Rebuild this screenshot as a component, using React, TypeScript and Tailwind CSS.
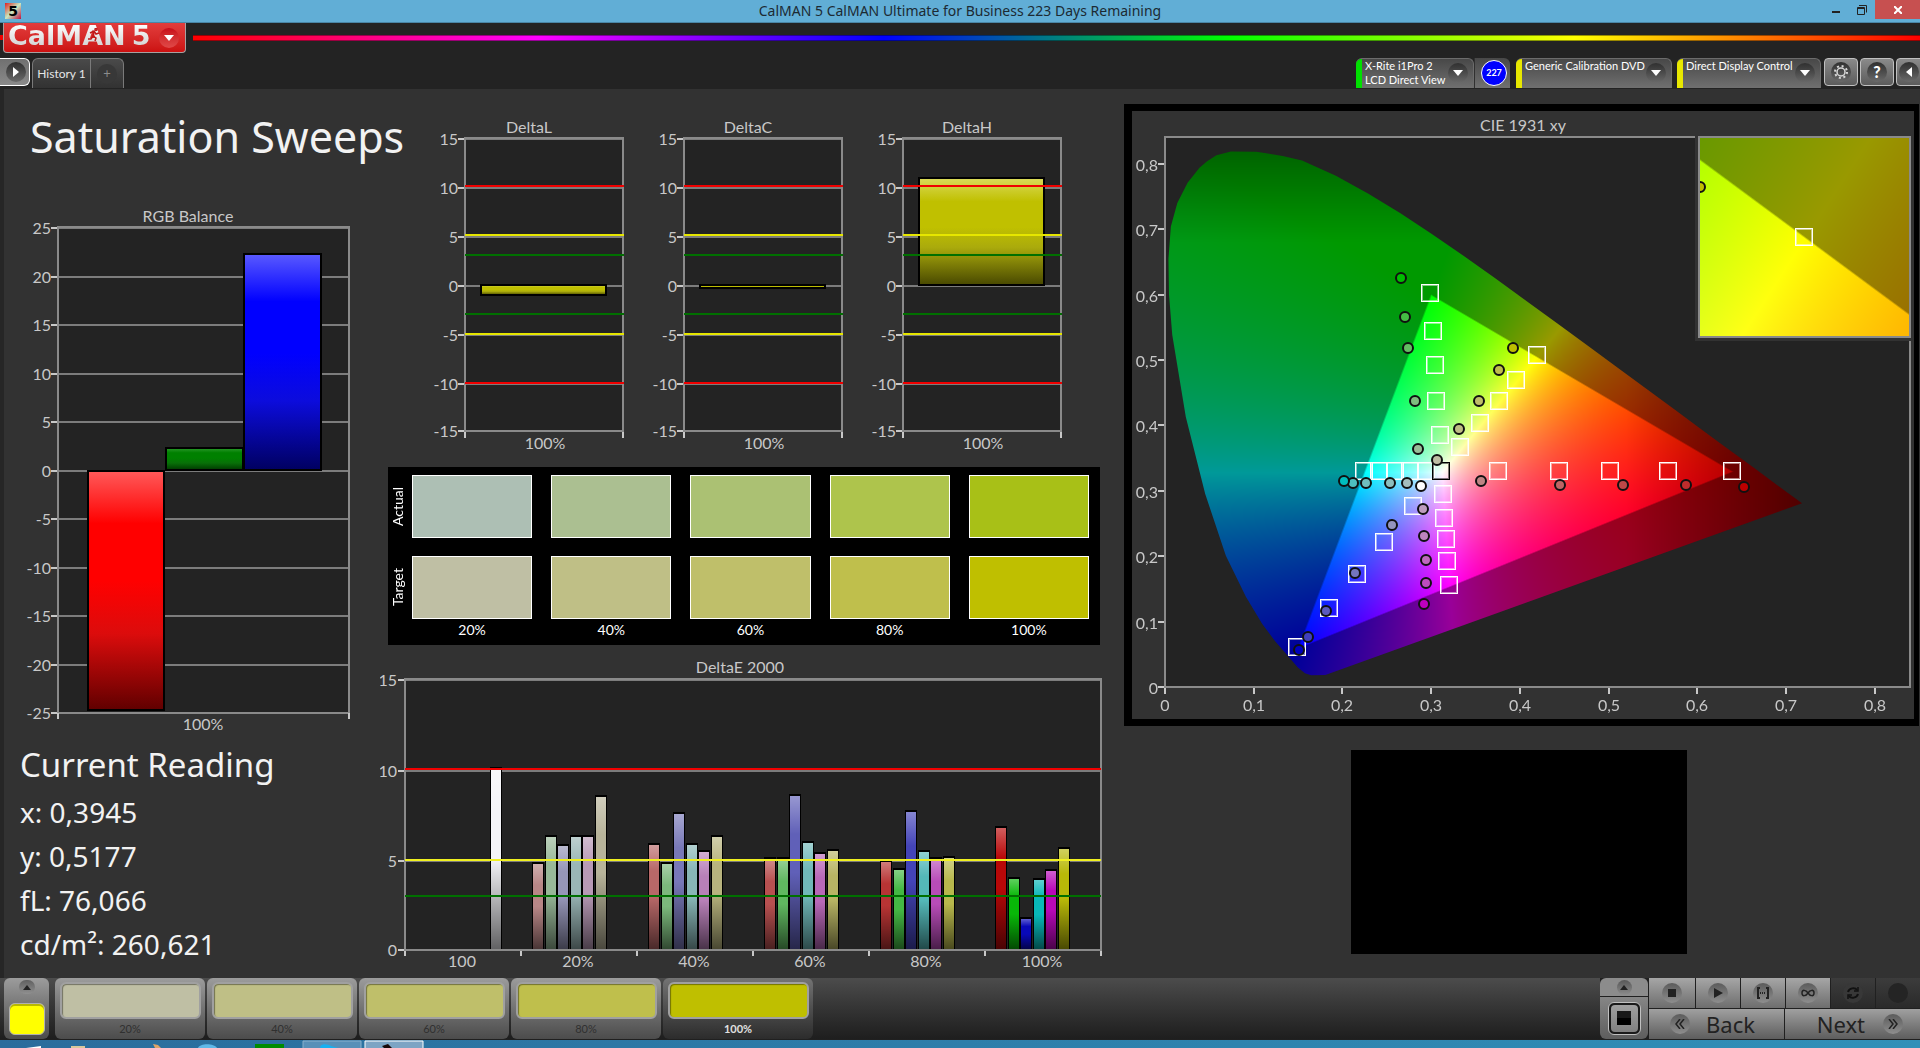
import React, { useLayoutEffect, useRef } from "react";

type Pt = [number, number];
type Marker = [number, number, string];

const LABEL = "#c8c8c8";

/* ---------- chromaticity drawing ---------- */

const LOCUS: Pt[] = [
  [0.181, 0.0185], [0.165, 0.018], [0.158, 0.021], [0.15, 0.03], [0.139, 0.047], [0.1241, 0.0705], [0.1096, 0.0968],
  [0.0913, 0.1379], [0.0687, 0.2007], [0.0454, 0.295], [0.0235, 0.4127], [0.0082, 0.5384], [0.0045, 0.6],
  [0.0039, 0.6548], [0.0066, 0.704], [0.0139, 0.7402], [0.0255, 0.771], [0.0389, 0.794], [0.0475, 0.804], [0.058, 0.813],
  [0.0743, 0.819], [0.103, 0.8185], [0.1142, 0.8162], [0.1329, 0.812], [0.1547, 0.8049], [0.1929, 0.7816], [0.2296, 0.7543],
  [0.2658, 0.7243], [0.3016, 0.6923], [0.3373, 0.6589], [0.3731, 0.6245], [0.4087, 0.5896], [0.4441, 0.5547],
  [0.4788, 0.5202], [0.5125, 0.4866], [0.5448, 0.4544], [0.5752, 0.4242], [0.6029, 0.3965], [0.627, 0.3725],
  [0.6658, 0.334], [0.6915, 0.3083], [0.719, 0.281],
];
const TRI: Pt[] = [[0.64, 0.33], [0.3, 0.6], [0.15, 0.06]];

function insideAmount(x: number, y: number, unit: number) {
  let d = Infinity;
  for (let i = 0; i < 3; i++) {
    const [ax, ay] = TRI[i];
    const [bx, by] = TRI[(i + 1) % 3];
    const len = Math.hypot(bx - ax, by - ay);
    d = Math.min(d, ((bx - ax) * (y - ay) - (by - ay) * (x - ax)) / len);
  }
  return Math.max(0, Math.min(1, (d * unit) / 2 + 0.5));
}

function xyColor(x: number, y: number, unit: number): [number, number, number] {
  const z = 1 - x - y;
  const r = Math.max(0, 3.2406 * x - 1.5372 * y - 0.4986 * z);
  const g = Math.max(0, -0.9689 * x + 1.8758 * y + 0.0415 * z);
  const b = Math.max(0, 0.0557 * x - 0.204 * y + 1.057 * z);
  const m = Math.max(r, g, b, 0.0001);
  let fade = 1;
  if (x > 0.52) fade = 1 - (x - 0.52) * 2.4;
  if (y > 0.68) fade = 1 - (y - 0.68) * 2.5;
  const k = (255 / m) * fade * (0.6 + 0.4 * insideAmount(x, y, unit));
  return [r * k, g * k, b * k];
}

interface GamutProps { w: number; h: number; x0: number; y0: number; sx: number; sy: number; clip?: boolean }

/* x0,y0: chromaticity at the top-left pixel; sx,sy: pixels per unit */
function Gamut({ w, h, x0, y0, sx, sy, clip }: GamutProps) {
  const ref = useRef<HTMLCanvasElement>(null);
  useLayoutEffect(() => {
    const ctx = ref.current!.getContext("2d")!;
    const img = ctx.createImageData(w, h);
    for (let j = 0; j < h; j++) {
      for (let i = 0; i < w; i++) {
        const c = xyColor(x0 + i / sx, y0 - j / sy, sx);
        const o = (j * w + i) * 4;
        img.data[o] = c[0];
        img.data[o + 1] = c[1];
        img.data[o + 2] = c[2];
        img.data[o + 3] = 255;
      }
    }
    ctx.putImageData(img, 0, 0);
    if (clip) {
      ctx.globalCompositeOperation = "destination-in";
      ctx.beginPath();
      LOCUS.forEach(([x, y]) => ctx.lineTo((x - x0) * sx, (y0 - y) * sy));
      ctx.closePath();
      ctx.fill();
      ctx.globalCompositeOperation = "source-over";
    }
  }, [w, h, x0, y0, sx, sy, clip]);
  return <canvas ref={ref} width={w} height={h} className="block h-full w-full" />;
}

const TARGETS: Pt[] = [
  [1430, 293], [1433, 331], [1435, 365], [1436, 401], [1440, 435],
  [1460, 447], [1480, 423], [1499, 401], [1516, 380], [1537, 355],
  [1364, 471], [1379, 471], [1395, 471], [1410, 471], [1426, 471],
  [1498, 471], [1559, 471], [1610, 471], [1668, 471], [1732, 471],
  [1413, 506], [1384, 542], [1357, 574], [1329, 608], [1297, 647],
  [1443, 494], [1444, 518], [1446, 539], [1447, 561], [1449, 585],
];
const READINGS: Marker[] = [
  [1401, 278, "#00be00"], [1405, 317, "#44be44"], [1408, 348, "#62be62"], [1415, 401, "#7ebe7e"], [1418, 449, "#98be98"],
  [1437, 460, "#bebea4"], [1459, 429, "#bebe84"], [1479, 401, "#bebe68"], [1499, 370, "#bebe4c"], [1513, 348, "#bebe00"],
  [1353, 483, "#4ebebe"], [1344, 481, "#00bebe"], [1366, 483, "#70bebe"], [1390, 483, "#8cbebe"], [1407, 483, "#a4bebe"],
  [1421, 486, "#ffffff"],
  [1481, 481, "#be8484"], [1560, 485, "#be6464"], [1623, 485, "#be4848"], [1686, 485, "#be2c2c"], [1744, 487, "#be0000"],
  [1392, 525, "#9494be"], [1355, 573, "#7474be"], [1326, 611, "#5a5abe"], [1308, 637, "#4040be"], [1299, 650, "#0000be"],
  [1423, 509, "#be9cbe"], [1424, 536, "#be84be"], [1426, 560, "#be68be"], [1426, 583, "#be4cbe"], [1424, 604, "#be00be"],
];

/* a crisp outline with a softer line inside it */
function Box({ x, y, color }: { x: number; y: number; color: string }) {
  return (
    <g fill={color}>
      <path fillRule="evenodd" d={`M${x - 9} ${y - 9}h18v18h-18ZM${x - 8} ${y - 8}v16h16v-16Z`} />
      <path fillRule="evenodd" fillOpacity="0.5" d={`M${x - 8} ${y - 8}h16v16h-16ZM${x - 7} ${y - 7}v14h14v-14Z`} />
    </g>
  );
}

function CieChart() {
  const xs = [0, 1, 2, 3, 4, 5, 6, 7, 8];
  return (
    <svg viewBox="1132 111 782 608" className="block h-auto w-full bg-[#323232]" role="img" aria-label="CIE 1931 xy">
      <text x="1523" y="131" textAnchor="middle" fontSize="16" fill={LABEL}>CIE 1931 xy</text>
      <rect x="1165" y="137" width="745" height="550" fill="#232323" />
      <foreignObject x="1165" y="137" width="745" height="550">
        <Gamut w={745} h={550} x0={0} y0={0.841} sx={886} sy={654} clip />
      </foreignObject>
      <rect x="1165" y="137" width="745" height="550" fill="none" stroke="#8a8a8a" strokeWidth="2" />
      {xs.map((i) => {
        const x = 1165 + Math.round(i * 88.7);
        const y = 687 - Math.round(i * 65.4);
        const t = i === 0 ? "0" : "0," + i;
        return (
          <g key={i} fill={LABEL} fontSize="16">
            <rect x={x - 1} y="688" width="2" height="6" />
            <rect x="1158" y={y - 1} width="6" height="2" />
            <text x={x} y="711" textAnchor="middle">{t}</text>
            <text x="1158" y={y + 7} textAnchor="end">{t}</text>
          </g>
        );
      })}
      {TARGETS.map(([x, y], i) => (
        <Box key={i} x={x} y={y} color="#fff" />
      ))}
      <Box x={1441} y={471} color="#000" />
      {READINGS.map(([x, y, c], i) => (
        <circle key={i} cx={x} cy={y} r="5" fill={c} stroke="#101010" strokeWidth="2" />
      ))}
      <rect x="1695" y="135" width="220" height="206" fill="#323232" />
      <svg x="1699" y="137" width="211" height="200" viewBox="1699 137 211 200">
        <foreignObject x="1699" y="137" width="211" height="200">
          <Gamut w={211} h={200} x0={0.394} y0={0.531} sx={4190} sy={3900} />
        </foreignObject>
        <circle cx="1700" cy="187" r="5" fill="#bebe00" stroke="#101010" strokeWidth="2" />
        <Box x={1804} y={237} color="#fff" />
      </svg>
      <rect x="1699" y="137" width="211" height="200" fill="none" stroke="#8a8a8a" strokeWidth="2" />
    </svg>
  );
}

/* ---------- bar charts ---------- */

function RgbBalance() {
  const ticks = [25, 20, 15, 10, 5, 0, -5, -10, -15, -20, -25];
  return (
    <svg viewBox="4 200 376 536" className="block h-auto w-full" role="img" aria-label="RGB Balance">
      <defs>
        {[["r", "#ff5a5a", "#ff0000", "#dc0c0c", "#600000"], ["g", "#2c9a2c", "#008000", "#087008", "#003800"], ["b", "#5a5aff", "#0000ff", "#0c0cdc", "#000060"]].map((g) => (
          <linearGradient key={g[0]} id={"rgb-" + g[0]} x1="0" y1="0" x2="0" y2="1">
            <stop offset="0" stopColor={g[1]} />
            <stop offset="0.22" stopColor={g[2]} />
            <stop offset="0.46" stopColor={g[2]} />
            <stop offset="0.68" stopColor={g[3]} />
            <stop offset="1" stopColor={g[4]} />
          </linearGradient>
        ))}
      </defs>
      <text x="188" y="222" textAnchor="middle" fontSize="16" fill={LABEL}>RGB Balance</text>
      <rect x="58" y="227" width="291" height="486" fill="#232323" />
      {ticks.map((t, i) => {
        const y = 228 + Math.round(i * 48.5);
        return (
          <g key={t}>
            <rect x="58" y={y - 1} width="291" height="2" fill="#7c7c7c" />
            <rect x="51" y={y - 1} width="7" height="2" fill={LABEL} />
            <text x="51" y={y + 6} textAnchor="end" fontSize="16" fill={LABEL}>{t}</text>
          </g>
        );
      })}
      <rect x="58" y="227" width="291" height="486" fill="none" stroke="#8a8a8a" strokeWidth="2" />
      <rect x="57" y="713" width="2" height="6" fill={LABEL} />
      <rect x="348" y="713" width="2" height="6" fill={LABEL} />
      <g stroke="#000" strokeWidth="2">
        <rect x="88" y="471" width="76" height="239" fill="url(#rgb-r)" />
        <rect x="166" y="448" width="77" height="22" fill="url(#rgb-g)" />
        <rect x="244" y="254" width="77" height="216" fill="url(#rgb-b)" />
      </g>
      <text x="203" y="730" textAnchor="middle" fontSize="16" fill={LABEL}>100%</text>
    </svg>
  );
}

interface DeltaProps { name: string; top: number; height: number }

function DeltaChart({ name, top, height }: DeltaProps) {
  const ticks = [15, 10, 5, 0, -5, -10, -15];
  const limits: [number, string][] = [[186, "#f00000"], [235, "#e6e600"], [255, "#007000"], [314, "#007000"], [334, "#e6e600"], [383, "#f00000"]];
  return (
    <svg viewBox="424 112 219 348" className="block h-auto w-full" role="img" aria-label={name}>
      <defs>
        <linearGradient id={"d-" + name} x1="0" y1="0" x2="0" y2="1">
          <stop offset="0" stopColor="#dada5a" />
          <stop offset="0.22" stopColor="#c0c000" />
          <stop offset="0.46" stopColor="#c0c000" />
          <stop offset="0.65" stopColor="#aaaa0c" />
          <stop offset="1" stopColor="#484800" />
        </linearGradient>
      </defs>
      <text x="529" y="133" textAnchor="middle" fontSize="16" fill={LABEL}>{name}</text>
      <rect x="465" y="138" width="158" height="293" fill="#232323" />
      {ticks.map((t, i) => {
        const y = Math.min(431, 139 + i * 49);
        return (
          <g key={t}>
            <rect x="465" y={y - 1} width="158" height="2" fill="#7c7c7c" />
            <rect x="458" y={y - 1} width="7" height="2" fill={LABEL} />
            <text x="458" y={y + 6} textAnchor="end" fontSize="16" fill={LABEL}>{t}</text>
          </g>
        );
      })}
      <rect x="465" y="138" width="158" height="293" fill="none" stroke="#8a8a8a" strokeWidth="2" />
      <rect x="464" y="432" width="2" height="6" fill={LABEL} />
      <rect x="622" y="432" width="2" height="6" fill={LABEL} />
      <rect x="481" y={top} width="125" height={height} fill={"url(#d-" + name + ")"} stroke="#000" strokeWidth="2" />
      {limits.map(([y, c]) => (
        <rect key={y} x="465" y={y - 1} width="159" height="2" fill={c} />
      ))}
      <text x="545" y="449" textAnchor="middle" fontSize="16" fill={LABEL}>100%</text>
    </svg>
  );
}

const DE_GROUPS: { x: number; tops: number[]; colors: string[] }[] = [
  { x: 532, tops: [862, 835, 844, 835, 835, 795], colors: ["#b88686", "#98b898", "#9696b8", "#9ab6b6", "#b89ab6", "#b8b49a"] },
  { x: 648, tops: [843, 862, 812, 843, 850, 835], colors: ["#b86868", "#7cb87c", "#7878b8", "#88b6b6", "#b880b8", "#b8b47e"] },
  { x: 764, tops: [857, 857, 794, 841, 852, 849], colors: ["#b85050", "#60b860", "#6060b8", "#70b8b8", "#b868b8", "#b8b464"] },
  { x: 880, tops: [860, 868, 810, 850, 857, 856], colors: ["#b83434", "#44b844", "#4444b8", "#54b8b8", "#b84cb8", "#b8b84c"] },
  { x: 995, tops: [826, 877, 917, 878, 869, 847], colors: ["#b80808", "#08b808", "#0808b8", "#08b8b8", "#b808b8", "#b8b808"] },
];

function DeltaE() {
  const rows: [number, number][] = [[15, 680], [10, 771], [5, 861], [0, 950]];
  const names = ["100", "20%", "40%", "60%", "80%", "100%"];
  return (
    <svg viewBox="380 645 735 333" className="block h-auto w-full" role="img" aria-label="DeltaE 2000">
      <defs>
        <linearGradient id="de-shade" x1="0" y1="0" x2="0" y2="1">
          <stop offset="0" stopColor="#fff" stopOpacity="0.35" />
          <stop offset="0.25" stopColor="#fff" stopOpacity="0" />
          <stop offset="0.5" stopColor="#000" stopOpacity="0" />
          <stop offset="1" stopColor="#000" stopOpacity="0.6" />
        </linearGradient>
      </defs>
      <text x="740" y="673" textAnchor="middle" fontSize="16" fill={LABEL}>DeltaE 2000</text>
      <rect x="405" y="679" width="696" height="271" fill="#232323" />
      {rows.map(([t, y]) => (
        <g key={t}>
          <rect x="405" y={y - 1} width="696" height="2" fill="#7c7c7c" />
          <rect x="398" y={y - 1} width="7" height="2" fill={LABEL} />
          <text x="397" y={y + 6} textAnchor="end" fontSize="16" fill={LABEL}>{t}</text>
        </g>
      ))}
      <rect x="405" y="679" width="696" height="271" fill="none" stroke="#8a8a8a" strokeWidth="2" />
      {[0, 1, 2, 3, 4, 5, 6].map((i) => (
        <rect key={i} x={404 + i * 116} y="951" width="2" height="5" fill={LABEL} />
      ))}
      {names.map((n, i) => (
        <text key={n} x={462 + i * 116} y="967" textAnchor="middle" fontSize="16" fill={LABEL}>{n}</text>
      ))}
      <rect x="490" y="767" width="12" height="182" fill="#000" />
      <rect x="491" y="769" width="10" height="180" fill="#f4f4f8" />
      <rect x="491" y="769" width="10" height="180" fill="url(#de-shade)" />
      {DE_GROUPS.map((g) =>
        g.tops.map((top, i) => {
          const x = g.x + Math.round(i * 12.6);
          return (
            <g key={g.x + "-" + i}>
              <rect x={x} y={top} width="12" height={949 - top} fill="#000" />
              <rect x={x + 1} y={top + 2} width="10" height={947 - top} fill={g.colors[i]} />
              <rect x={x + 1} y={top + 2} width="10" height={947 - top} fill="url(#de-shade)" />
            </g>
          );
        }),
      )}
      <rect x="405" y="768" width="696" height="2" fill="#f00000" />
      <rect x="405" y="859" width="696" height="2" fill="#f0f020" />
      <rect x="405" y="895" width="696" height="2" fill="#007000" />
    </svg>
  );
}

/* ---------- swatches ---------- */

const SWATCHES: [string, string, string][] = [
  ["20%", "bg-[#adbfb4]", "bg-[#bfbfa4]"],
  ["40%", "bg-[#abbf91]", "bg-[#bfbf86]"],
  ["60%", "bg-[#abc173]", "bg-[#bfbf6a]"],
  ["80%", "bg-[#aec44c]", "bg-[#bfbf4c]"],
  ["100%", "bg-[#a8c017]", "bg-[#bfbf00]"],
];

function SwatchPanel() {
  return (
    <section className="mr-[15px] ml-2 grid grid-cols-[24px_1fr] bg-black pt-2 pr-[11px] text-sm text-white">
      <div className="grid h-[63px] w-5 place-items-center"><span className="rotate-180 leading-5 [writing-mode:vertical-rl]">Actual</span></div>
      <div className="grid grid-cols-5 gap-x-[19px]">
        {SWATCHES.map((s) => (
          <div key={s[0]} className={"h-[63px] border border-white " + s[1]} />
        ))}
      </div>
      <div className="mt-[18px] grid h-[63px] w-5 place-items-center"><span className="rotate-180 leading-5 [writing-mode:vertical-rl]">Target</span></div>
      <div className="mt-[18px] grid grid-cols-5 gap-x-[19px]">
        {SWATCHES.map((s) => (
          <div key={s[0]} className={"h-[63px] border border-white " + s[2]} />
        ))}
      </div>
      <div />
      <div className="grid grid-cols-5 gap-x-[19px]">
        {SWATCHES.map((s) => (
          <div key={s[0]} className="h-[26px] text-center leading-[22px]">{s[0]}</div>
        ))}
      </div>
    </section>
  );
}

/* ---------- header ---------- */

function Round({ children, dark }: { children?: React.ReactNode; dark?: boolean }) {
  return (
    <span className={"grid size-5 shrink-0 place-items-center rounded-full bg-linear-to-b " + (dark ? "from-[#303030] to-[#6a6a6a]" : "from-[#5c5c5c] to-[#8e8e8e]")}>
      {children}
    </span>
  );
}

const Down = () => <svg width="10" height="6" viewBox="0 0 10 6"><path d="M0 0H10L5 6Z" fill="#fff" /></svg>;

function SourceButton({ lines, bar, width }: { lines: string[]; bar: string; width: string }) {
  return (
    <button className={"flex h-[30px] items-start overflow-hidden rounded-t-md border-t border-r border-[#6c6c6c] bg-linear-to-b from-[#484848] to-[#707070] text-left " + width}>
      <span className={"h-full w-[6px] shrink-0 " + bar} />
      <span className="grow pl-[3px] text-[11px] leading-[14px] whitespace-nowrap text-white">{lines.map((l) => <span key={l} className="block">{l}</span>)}</span>
      <span className="mt-1 mr-[5px]"><Round dark><Down /></Round></span>
    </button>
  );
}

const toolBtn = "grid h-7 w-[34px] place-items-center rounded border border-[#c0c0c0] bg-linear-to-b from-[#8a8a8a] to-[#5c5c5c]";

function Header() {
  return (
    <header className="bg-[#232323]">
      <div className="flex h-[30px] items-start">
        <div className="mt-3 h-[5px] w-[3px] bg-[#f00000]" />
        <button aria-label="CalMAN 5 menu" className="flex h-[30px] w-[183px] items-center rounded-b border-x border-b border-[#a8a0a0] bg-linear-to-b from-[#e23c3c] to-[#cc1010] pl-1">
          <span className="relative flex gap-[6px] bg-linear-to-b from-white to-[#c8c8c8] bg-clip-text pb-1 font-['DejaVu_Sans'] text-[27px] leading-6 font-bold text-transparent">
            <span>CalMAN</span><span>5</span>
            <svg className="absolute top-[4px] left-[79px]" width="14" height="14" viewBox="0 0 14 14" fill="none" stroke="#c01818" strokeWidth="1.5"><circle cx="9" cy="1.5" r="1" /><path d="M3 5L7 3L9 6L12 5M7 4L6 8L9 10L8 13M6 8L4 11L1 11" /></svg>
          </span>
          <span className="ml-[9px] grid size-5 place-items-center rounded-full bg-linear-to-b from-[#c80818] to-[#e04848]"><Down /></span>
        </button>
        <div className="mt-3 ml-[7px] h-[6px] grow border-y border-black/40 bg-[linear-gradient(90deg,#f00_0%,#f0f_20%,#00f_40%,#0f0_60%,#ff0_80%,#f00_100%)]" />
      </div>
      <div className="mt-[5px] flex h-[31px] items-start">
        <button aria-label="Expand" className="flex h-7 w-[30px] items-center justify-end rounded-r-md border border-l-0 border-white bg-linear-to-b from-[#707070] to-[#8a8a8a] pr-[3px]">
          <Round dark><svg width="6" height="10" viewBox="0 0 6 10"><path d="M0 0V10L6 5Z" fill="#fff" /></svg></Round>
        </button>
        <div className="ml-[2px] flex h-[30px] rounded-t-md border-x border-t border-[#7a7a7a] bg-linear-to-b from-[#4a4a4a] to-[#323232]">
          <button className="w-[58px] border-r border-[#7a7a7a] text-[12px] whitespace-nowrap text-[#e6e6e6]">History 1</button>
          <button aria-label="New tab" className="grid w-8 place-items-center"><span className="grid size-5 place-items-center rounded-full bg-[#383838] text-[13px] leading-none text-[#8c8c8c]">+</span></button>
        </div>
        <div className="ml-auto flex items-start">
          <SourceButton lines={["X-Rite i1Pro 2", "LCD Direct View"]} bar="bg-[#00e000]" width="w-[118px]" />
          <span className="mr-[6px] grid h-[30px] w-9 place-items-center rounded-tr-md border-l border-[#303030] bg-linear-to-b from-[#484848] to-[#707070] pl-[3px]">
            <span className="grid size-[26px] place-items-center rounded-full border border-white bg-[#0000ff] text-[9px] font-bold text-white">227</span>
          </span>
          <SourceButton lines={["Generic Calibration DVD"]} bar="bg-[#e8e800]" width="w-[156px]" />
          <span className="w-[5px]" />
          <SourceButton lines={["Direct Display Control"]} bar="bg-[#e8e800]" width="w-[144px]" />
          <div className="ml-[3px] flex gap-[2px]">
            <button aria-label="Settings" className={toolBtn}>
              <Round dark><svg width="14" height="14" viewBox="0 0 14 14" fill="none" stroke="#d8d8d8"><circle cx="7" cy="7" r="4" strokeWidth="1.5" /><circle cx="7" cy="7" r="6" strokeWidth="2" strokeDasharray="2 2.7" /></svg></Round>
            </button>
            <button aria-label="Help" className={toolBtn}><Round dark><span className="text-base leading-none font-black text-white">?</span></Round></button>
            <div className="w-6 overflow-hidden">
              <button aria-label="Collapse" className={toolBtn + " pr-2"}><Round dark><svg width="6" height="10" viewBox="0 0 6 10"><path d="M6 0V10L0 5Z" fill="#fff" /></svg></Round></button>
            </div>
          </div>
        </div>
      </div>
    </header>
  );
}

function TitleBar() {
  return (
    <div className="grid h-[23px] grid-cols-[1fr_auto_1fr] items-start border-b border-[#4a86a6] bg-[#61aed6]">
      <span className="mt-[3px] ml-[5px] grid size-4 place-items-center bg-[linear-gradient(135deg,#e02020,#c8e8c0_50%,#c01040)] font-['DejaVu_Sans'] text-[14px] leading-none font-black text-black">5</span>
      <span className="font-['Noto_Sans'] text-[14px] leading-[22px] text-[#1c2a33]">CalMAN 5 CalMAN Ultimate for Business 223 Days Remaining</span>
      <div className="flex justify-end">
        <button aria-label="Minimize" className="grid h-[19px] w-[26px] items-end justify-center pb-[6px]"><span className="block h-[2px] w-2 bg-[#222]" /></button>
        <button aria-label="Restore" className="grid h-[19px] w-[26px] place-items-center">
          <svg width="10" height="10" viewBox="0 0 10 10" fill="none" stroke="#222"><path d="M2 0.5H9.500V7.500M0.500 2.500H7.500V9.500H0.500ZM0.500 3.500H7.500" /></svg>
        </button>
        <button aria-label="Close" className="grid h-[19px] w-[45px] place-items-center bg-[#c75050]">
          <svg width="8" height="8" viewBox="0 0 8 8" stroke="#fff" strokeWidth="2"><path d="M0 0L8 8M8 0L0 8" /></svg>
        </button>
      </div>
    </div>
  );
}

/* ---------- footer ---------- */

const ctl = "grid h-[30px] place-items-center bg-linear-to-b from-[#a6a6a6] to-[#6e6e6e]";
const ctlOff = "grid h-[30px] place-items-center bg-linear-to-b from-[#3c3c3c] to-[#2a2a2a]";

function Up() {
  return <svg width="8" height="5" viewBox="0 0 8 5"><path d="M4 0L8 5H0Z" fill="#222" /></svg>;
}

function Footer() {
  return (
    <footer className="flex h-[62px] items-start border-b border-[#202020] bg-linear-to-b from-[#4c4c4c] to-[#1e1e1e]">
      <button aria-label="Current patch" className="ml-1 flex h-[61px] w-[45px] flex-col items-center justify-between rounded-md bg-linear-to-b from-[#9c9c9c] to-[#4c4c4c] pt-[2px] pb-1">
        <span className="grid h-[14px] w-4 place-items-center rounded-full bg-linear-to-b from-[#606060] to-[#909090]"><Up /></span>
        <span className="h-8 w-9 rounded-md border border-[#b0b0b0] bg-[#ffff00] shadow-[inset_0_2px_0_#b8b800]" />
      </button>
      <div className="ml-[6px] flex gap-[2px]">
        {SWATCHES.map((s, i) => (
          <button key={s[0]} className={"flex h-[61px] w-[150px] flex-col items-center rounded-md bg-linear-to-b pt-1 " + (i === 4 ? "from-[#747474] to-[#2c2c2c] font-bold text-[#e0e0e0]" : "from-[#9c9c9c] to-[#4c4c4c] text-[#303030]")}>
            <span className={"h-[38px] w-[141px] rounded-md border-2 border-[#a0a0a0] shadow-[inset_1px_1px_1px_#0006] " + s[2]} />
            <span className="text-[11px] leading-5">{s[0]}</span>
          </button>
        ))}
      </div>
      <div className="ml-auto flex gap-px bg-[#202020]">
        <div className="flex h-[61px] w-12 flex-col gap-px">
          <button aria-label="Show more" className="grid h-[18px] place-items-center rounded-t-md bg-[#8c8c8c]"><span className="grid size-[15px] place-items-center rounded-full bg-linear-to-b from-[#585858] to-[#8c8c8c]"><Up /></span></button>
          <button aria-label="Read" className="grid grow place-items-center rounded-b-md bg-linear-to-b from-[#868686] to-[#5e5e5e]">
            <span className="grid size-[33px] place-items-center rounded-md border border-[#c0c0c0] bg-[#1a1a1a]"><span className="grid size-[27px] place-items-center rounded bg-linear-to-b from-[#a0a0a0] to-[#808080]"><span className="size-[14px] bg-linear-to-b from-[#181818] from-50% to-black to-50%" /></span></span>
          </button>
        </div>
        <div className="flex w-[271px] flex-col gap-px">
          <div className="grid grid-cols-[46px_repeat(5,1fr)] gap-px">
            <button aria-label="Stop" className={ctl}><Round><span className="size-2 bg-[#222]" /></Round></button>
            <button aria-label="Play" className={ctl}><Round><svg width="9" height="10" viewBox="0 0 9 10"><path d="M0 0L9 5L0 10Z" fill="#222" /></svg></Round></button>
            <button aria-label="Read series" className={ctl}><Round><svg width="12" height="12" viewBox="0 0 12 12" fill="none" stroke="#222" strokeWidth="2"><path d="M3 1H1V11H3M9 1H11V11H9" /><path d="M3 6H9" strokeDasharray="1 1" /></svg></Round></button>
            <button aria-label="Read continuously" className={ctl}><Round><svg width="14" height="8" viewBox="0 0 14 8" fill="none" stroke="#222" strokeWidth="1.500"><path d="M7 4C5 1 1 0 1 4S5 7 7 4S13 0 13 4S9 7 7 4Z" /></svg></Round></button>
            <button aria-label="Refresh" className={ctlOff}><span className="grid size-5 place-items-center rounded-full bg-[#383838]"><svg width="12" height="12" viewBox="0 0 12 12" fill="none" stroke="#111" strokeWidth="2"><path d="M1 5C2 1 8 0 10 3M11 7C10 11 4 12 2 9" /><path d="M11 0V4H7M1 12V8H5" strokeWidth="1.500" /></svg></span></button>
            <button aria-label="Record" className={ctlOff}><span className="size-5 rounded-full bg-[#242424]" /></button>
          </div>
          <div className="grid grid-cols-2 gap-px font-['Noto_Sans'] text-[22px] leading-none text-[#222]">
            <button className="flex h-[30px] items-center bg-linear-to-b from-[#a0a0a0] to-[#5e5e5e] pl-[21px]">
              <Round><svg width="10" height="10" viewBox="0 0 10 10" fill="none" stroke="#222" strokeWidth="1.500"><path d="M5 0L1 5L5 10M9 0L5 5L9 10" /></svg></Round>
              <span className="ml-4">Back</span>
            </button>
            <button className="flex h-[30px] items-center justify-end bg-linear-to-b from-[#a0a0a0] to-[#5e5e5e] pr-[17px]">
              <span className="mr-[18px]">Next</span>
              <Round><svg width="10" height="10" viewBox="0 0 10 10" fill="none" stroke="#222" strokeWidth="1.500"><path d="M1 0L5 5L1 10M5 0L9 5L5 10" /></svg></Round>
            </button>
          </div>
        </div>
      </div>
    </footer>
  );
}

function Taskbar() {
  return (
    <div className="h-2 overflow-hidden bg-linear-to-r from-[#2a6c9c] to-[#3090b8]">
      <svg width="440" height="8" viewBox="0 0 440 8" className="block">
        <path d="M26 8L41 6V8Z" fill="#fff" />
        <rect x="71" y="6" width="14" height="2" fill="#d8c89c" />
        <path d="M153 4L158 5L161 8H155Z" fill="#e0a468" />
        <path d="M198 8C200 3 214 3 217 8Z" fill="#60b8e8" />
        <rect x="255" y="4" width="29" height="4" fill="#008c00" />
        <path d="M303 8V1H361V8" fill="#5890b8" stroke="#88b0cc" />
        <path d="M320 8C320 3 328 4 331 6L338 8Z" fill="#18b0f0" />
        <path d="M365 8V1H423V8" fill="#7ca4c4" stroke="#fff" />
        <path d="M382 6L388 4L392 8H384Z" fill="#180808" />
      </svg>
    </div>
  );
}

export default function App() {
  return (
    <div className="flex min-h-screen flex-col bg-[#323232] font-[Lato,'Noto_Sans',sans-serif]">
      <TitleBar />
      <Header />
      <main className="grid grow grid-cols-[376fr_735fr_805fr] border-l-4 border-[#262626] bg-[#323232]">
        <div className="min-w-0">
          <h1 className="pt-[22px] pl-[26px] font-['Noto_Sans'] text-[43px] leading-[52px] whitespace-nowrap text-[#f2f2f2]">Saturation Sweeps</h1>
          <div className="mt-[37px]"><RgbBalance /></div>
          <section className="pl-4 font-['Noto_Sans'] text-[#f2f2f2]">
            <h2 className="pt-[10px] text-[33px] leading-[38px]">Current Reading</h2>
            <div className="mt-[6px] text-[28px] leading-[44px]">
              <p>x: 0,3945</p>
              <p>y: 0,5177</p>
              <p>fL: 76,066</p>
              <p>cd/m²: 260,621</p>
            </div>
          </section>
        </div>
        <div className="min-w-0 pt-[23px]">
          <div className="grid grid-cols-3 pr-[34px] pl-11">
            <DeltaChart name="DeltaL" top={285} height={10} />
            <DeltaChart name="DeltaC" top={285} height={3} />
            <DeltaChart name="DeltaH" top={178} height={107} />
          </div>
          <div className="mt-[7px]"><SwatchPanel /></div>
          <DeltaE />
        </div>
        <div className="min-w-0 pt-[15px] pr-px pl-[9px]">
          <div className="border-t-[7px] border-r-[5px] border-b-[7px] border-l-8 border-black"><CieChart /></div>
          <div className="mt-6 mr-[232px] ml-[227px] h-[204px] bg-black" />
        </div>
      </main>
      <Footer />
      <Taskbar />
    </div>
  );
}
